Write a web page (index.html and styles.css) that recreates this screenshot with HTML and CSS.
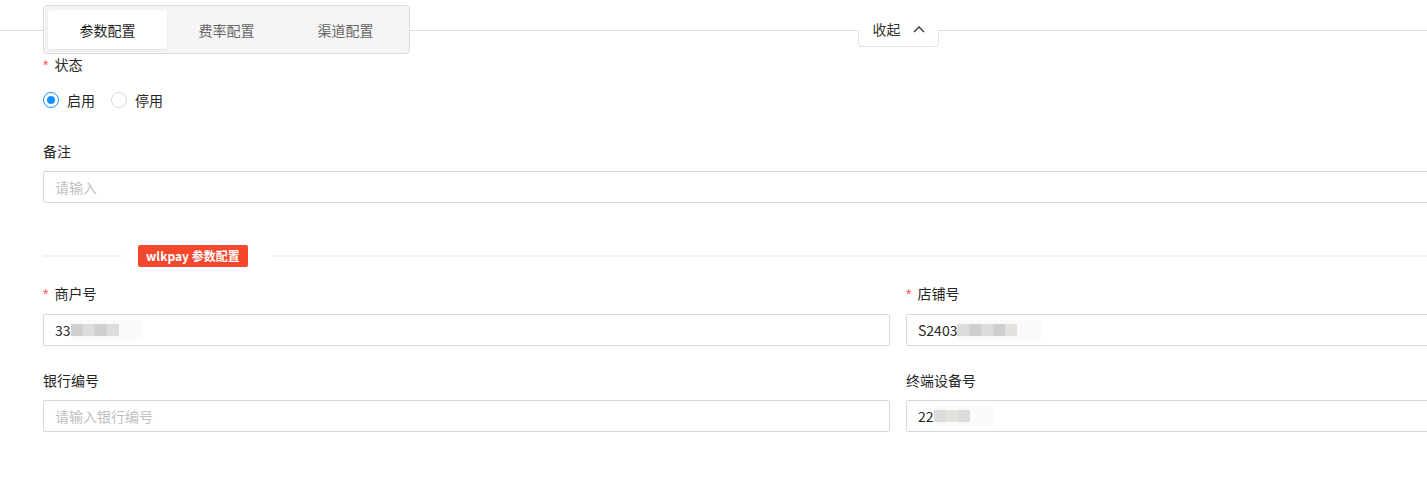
FILE: index.html
```html
<!doctype html>
<html>
<head>
<meta charset="utf-8">
<link rel="stylesheet" href="styles.css">
</head>
<body>
	<div class="topbar">
		<div class="topbar-inner">
			<div class="tabs">
				<div class="tab active">参数配置</div>
				<div class="tab">费率配置</div>
				<div class="tab">渠道配置</div>
			</div>
			<div class="collapse">
				<span>收起</span>
				<svg width="12" height="8" viewBox="0 0 12 8"><path d="M1 7 L6 2 L11 7" fill="none" stroke="#333" stroke-width="1.4"/></svg>
			</div>
		</div>
	</div>

	<div class="form">
		<div class="item">
			<div class="label"><span class="req">*</span>状态</div>
			<div class="radios">
				<label class="radio"><span class="dot checked"></span>启用</label>
				<label class="radio"><span class="dot"></span>停用</label>
			</div>
		</div>

		<div class="item">
			<div class="label">备注</div>
			<div class="input placeholder">请输入</div>
		</div>

		<div class="divider">
			<div class="line short"></div>
			<div class="badge">wlkpay 参数配置</div>
			<div class="line"></div>
		</div>

		<div class="grid">
			<div class="item">
				<div class="label"><span class="req">*</span>商户号</div>
				<div class="input">33<span class="blur"><i class="b1"></i><i class="b2"></i><i class="b1"></i><i class="b2"></i></span></div>
			</div>
			<div class="item">
				<div class="label"><span class="req">*</span>店铺号</div>
				<div class="input">S2403<span class="blur"><i class="b2"></i><i class="b1"></i><i class="b2"></i><i class="b1"></i><i class="b3"></i></span></div>
			</div>
			<div class="item">
				<div class="label">银行编号</div>
				<div class="input placeholder">请输入银行编号</div>
			</div>
			<div class="item">
				<div class="label">终端设备号</div>
				<div class="input">22<span class="blur"><i class="b2"></i><i class="b3"></i><i class="b2"></i></span></div>
			</div>
		</div>
	</div>
</body>
</html>
```

FILE: styles.css
```css
html,body{
	margin: 0;
	background: #fff;
	font-family: "Noto Sans CJK SC", "Liberation Sans", sans-serif;
	font-size: 14px;
	color: #262626;
	overflow: hidden;
}

.topbar{
	padding-top: 5px;
	background: linear-gradient(#dcdcdc, #dcdcdc) 0 30px / 100% 1px no-repeat;
}

.topbar-inner{
	margin-left: 43px;
	width: 1710px;
	display: grid;
	grid-template-columns: 1fr auto 1fr;
	align-items: start;
}

.tabs{
	justify-self: start;
	display: flex;
	padding: 4px 4px 4px;
	background: #f5f5f5;
	border: 1px solid #dcdcdc;
	border-radius: 4px;
}

.tab{
	width: 119px;
	height: 39px;
	line-height: 40px;
	text-align: center;
	color: #666;
	border-radius: 2px;
}

.tab.active{
	background: #fff;
	color: #1f1f1f;
	box-shadow: 0 1px 3px rgba(0,0,0,0.08);
}

.collapse{
	position: relative;
	margin-top: 9px;
	height: 33px;
	padding: 0 14px 0 15px;
	display: flex;
	align-items: flex-start;
	gap: 12px;
	background: #fff;
	line-height: 31px;
	color: #333;
}

.collapse svg{
	margin-top: 11px;
}

.collapse::after{
	content: "";
	position: absolute;
	top: 16px;
	left: 0;
	right: 0;
	bottom: 0;
	border: 1px solid #e3e3e3;
	border-top: none;
	border-radius: 0 0 4px 4px;
}

.form{
	margin-left: 43px;
	width: 1710px;
}

.item{
	margin-bottom: 24px;
}

.label{
	line-height: 20px;
	padding-bottom: 2px;
	margin-bottom: 8px;
	color: #262626;
}

.req{
	color: #ff4d4f;
	margin-right: 6px;
	font-family: "Liberation Sans", sans-serif;
}

.radios{
	display: flex;
	gap: 16px;
	height: 30px;
	padding-bottom: 2px;
	align-items: center;
}

.radio{
	display: flex;
	align-items: center;
	gap: 8px;
}

.dot{
	width: 14px;
	height: 14px;
	border: 1px solid #d9d9d9;
	border-radius: 50%;
	position: relative;
}

.dot.checked{
	border-color: #1890ff;
}

.dot.checked::after{
	content: "";
	position: absolute;
	left: 3px;
	top: 3px;
	width: 8px;
	height: 8px;
	border-radius: 50%;
	background: #1890ff;
}

.input{
	height: 30px;
	line-height: 30px;
	border: 1px solid #d9d9d9;
	border-radius: 2px;
	padding: 0 11px;
	color: #262626;
	display: flex;
	align-items: center;
}

.input.placeholder{
	color: #bfbfbf;
}

.blur{
	display: inline-flex;
	height: 20px;
	padding: 0 24px 0 0;
	background: #fafafa;
}

.blur i{
	display: block;
	width: 12px;
	height: 12px;
	margin-top: 4px;
}

.blur .b1{ background: #cfcfcf; }
.blur .b2{ background: #dcdcdc; }
.blur .b3{ background: #e4e0dc; }

.divider{
	display: flex;
	align-items: center;
	margin: 42px 0 16px;
}

.line{
	flex: 1;
	height: 2px;
	background: #f3f3f3;
}

.line.short{
	flex: none;
	width: 78px;
}

.badge{
	margin: 0 25px 0 17px;
	height: 22px;
	line-height: 22px;
	padding: 0 8px;
	background: #f4472d;
	color: #fff;
	font-size: 12px;
	font-weight: bold;
	border-radius: 2px;
}

.grid{
	display: grid;
	grid-template-columns: 1fr 1fr;
	column-gap: 16px;
}
```
